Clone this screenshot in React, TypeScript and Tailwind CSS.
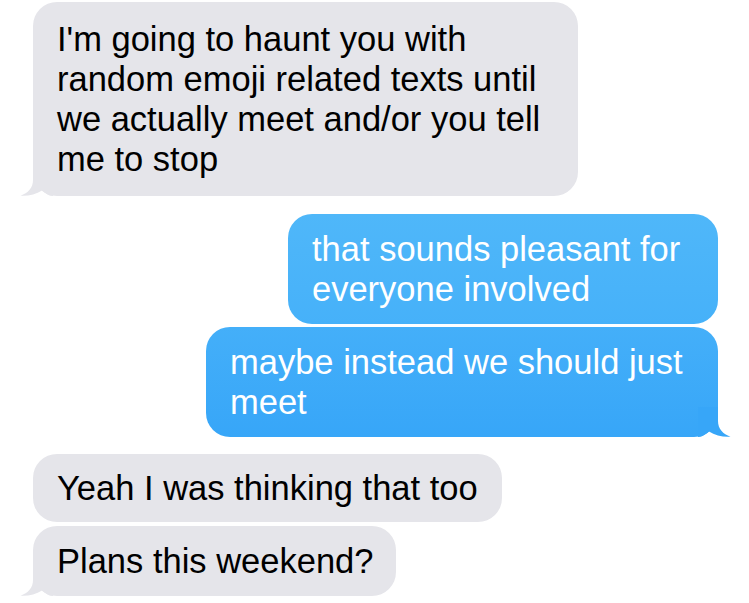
import React from 'react';

type Side = 'in' | 'out';

const TailIn: React.FC = () => (
  <svg className="absolute left-[-14px] bottom-0" width="34" height="30" viewBox="0 0 34 30">
    <path d="M14 0 L14 14 C14 22 9 27 1.5 29.7 C9 30.2 17 28.5 23 24.5 C27 28 30 30 34 30 L34 0 Z" fill="#e5e5ea" />
  </svg>
);

const TailOut: React.FC = () => (
  <svg className="absolute right-[-14px] bottom-0" width="34" height="30" viewBox="0 0 34 30">
    <path d="M20 0 L20 14 C20 22 25 27 32.5 29.7 C25 30.2 17 28.5 11 24.5 C7 28 4 30 0 30 L0 0 Z" fill="#37a6f8" />
  </svg>
);

const Bubble: React.FC<{ side: Side; width: string; py: string; tail?: boolean; lines: string[]; blue?: string }> = ({
  side,
  width,
  py,
  tail,
  lines,
  blue,
}) => {
  const isIn = side === 'in';
  return (
    <div
      className={`relative rounded-[24px] pl-[24px] whitespace-nowrap text-[34.5px] leading-[40px] ${width} ${py} ${
        isIn ? 'self-start ml-[33px] bg-[#e5e5ea] text-black' : `self-end mr-[31px] text-white ${blue}`
      }`}
    >
      {tail && (isIn ? <TailIn /> : <TailOut />)}
      <div className="relative">
        {lines.map((l) => (
          <div key={l}>{l}</div>
        ))}
      </div>
    </div>
  );
};

export default function App() {
  return (
    <div
      className="w-[749px] h-[603px] bg-white overflow-hidden flex flex-col pt-[2px]"
      style={{ fontFamily: '"Liberation Sans", Arial, sans-serif' }}
    >
      <Bubble
        side="in"
        width="w-[545px]"
        py="py-[17px]"
        tail
        lines={[
          "I'm going to haunt you with",
          'random emoji related texts until',
          'we actually meet and/or you tell',
          'me to stop',
        ]}
      />
      <div className="h-[18px]" />
      <Bubble
        side="out"
        width="w-[430px]"
        py="py-[15px]"
        blue="bg-gradient-to-b from-[#4fb7f9] to-[#46b1f9]"
        lines={['that sounds pleasant for', 'everyone involved']}
      />
      <div className="h-[3px]" />
      <Bubble
        side="out"
        width="w-[512px]"
        py="py-[15px]"
        tail
        blue="bg-gradient-to-b from-[#44aff9] to-[#37a6f8]"
        lines={['maybe instead we should just', 'meet']}
      />
      <div className="h-[17px]" />
      <Bubble side="in" width="w-[469px]" py="py-[14px]" lines={['Yeah I was thinking that too']} />
      <div className="h-[4px]" />
      <Bubble side="in" width="w-[363px]" py="py-[15px]" tail lines={['Plans this weekend?']} />
    </div>
  );
}
